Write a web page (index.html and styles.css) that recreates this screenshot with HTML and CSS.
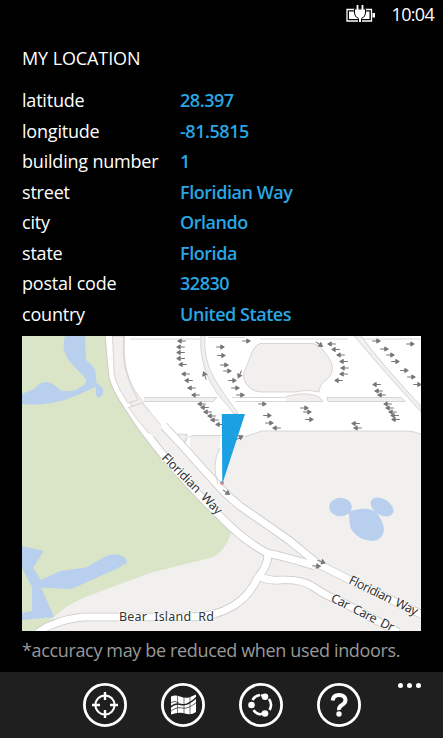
FILE: index.html
```html
<!DOCTYPE html>
<html>
	<head>
		<meta charset="UTF-8">
		<title>My Location</title>
		<link rel="stylesheet" href="styles.css">
	</head>
	<body>
		<div class="phone">
			<div class="status">
				<svg class="battery" width="32" height="20" viewBox="0 0 32 20">
					<path d="M2 5.5h24.500v11.500h-24.500z" fill="none" stroke="#fff" stroke-width="1.300"/>
					<path d="M4 7.500h20.500v7.500h-20.500zM27.500 9h2.500v4.500h-2.500z" fill="#fff"/>
					<path d="M9.500 5h11v4q0 4-4 5.500v4h-3v-4q-4-1.500-4-5.500z" fill="#fff" stroke="#000" stroke-width="1"/>
					<path d="M12.500 1v5M17.500 1v5" stroke="#fff" stroke-width="1.800"/>
				</svg>
				<span class="time">10:04</span>
			</div>
			<h1 class="title">MY LOCATION</h1>
			<dl class="info">
				<dt>latitude</dt><dd>28.397</dd>
				<dt>longitude</dt><dd>-81.5815</dd>
				<dt>building number</dt><dd>1</dd>
				<dt>street</dt><dd>Floridian Way</dd>
				<dt>city</dt><dd>Orlando</dd>
				<dt>state</dt><dd>Florida</dd>
				<dt>postal code</dt><dd>32830</dd>
				<dt>country</dt><dd>United States</dd>
			</dl>
			<svg class="map" width="399" height="295" viewBox="22 336 399 295">
				<defs>
					<path id="arr" d="M-3.800 0H3.500M4.300 0L.8 -2.100V2.100Z"/>
					<path id="way1" d="M161 458.500L222 520"/>
					<path id="way2" d="M348 583L424 620"/>
					<path id="care" d="M330 601L402 637"/>
				</defs>
				<rect class="land" x="22" y="336" width="399" height="295"/>
				<!-- park and lakes -->
				<path class="park" d="M22 336H107L109 360Q109 377 112 383L124 405L143 433L162 460L231 532Q230 540 222 550Q217 556 210 558L150 573L123 583L83 598Q65 606 54 617L36 631H22Z"/>
				<path class="water" d="M65 336H85L86 360Q94 366 95.500 372L96.500 383L102 387Q104 390 103 393Q101 398 98 397.500L96 395V386.500Q80 395 63 400.500Q43 406 22 404V394L34 389Q38 383 46 382Q51 382 54 385L61 390.500Q69 392 76 390L85 384Q88 380 84 377L73 365Q60 353 65 336Z"/>
				<path class="water" d="M22 546L43.700 551L33 568L41 580L60 571L86 567.500L104 557Q114 553 119 555Q126 556 127 563L116 569L75 587.500Q72 589 67 589L41 587.500L54 617L22 620V613L32 611V587L22 568Z"/>
				<g class="water">
					<ellipse cx="340.500" cy="507" rx="11.300" ry="9.300"/>
					<ellipse cx="382" cy="507" rx="12.500" ry="8" transform="rotate(32 382 507)"/>
					<path d="M349 512Q367 505 377 513Q384 523 384 530Q382 541 372 541Q358 540 351 529Q349 523 349 512Z"/>
				</g>
				<!-- parking lots -->
				<path class="lot" d="M124.500 336Q123 358 127 372Q131 388 144 403L172 436L185 453L190 446Q189 436 194 435H221L219 450Q214 460 215 470L218 483L223 482Q222 462 228 450Q233 441 240 438L262 431H405Q414 431 421 434V336Z"/>
				<path class="line" d="M124.500 336Q123 358 127 372Q131 388 144 403M238 439L262 431H405Q414 431 421 434M130 339H203M208 337.500H245M260 339H348M362 339H421"/>
				<path class="block" d="M260 343.500H313Q320 345 323 350Q332 360 332.500 368Q332 376 325 381Q320 384 319 392Q305 389 296 392H262Q248 392 243.500 378Q243 373 246 368L252 352Q255 345 260 343.500Z"/>
				<path class="block" d="M286 396.500Q303 392 313 395Q320 396 323 401.500H286M144 397.500H217L213 401.500H144M232 397.500H286M235 401.500H286M327 397.500H401L405.500 401.500H328Z"/>
				<path class="block" d="M171.500 435.500Q180 433 187.500 434.500L183 445Z"/>
				<path class="block" d="M201 336Q199 356 208 377Q215 393 228 406L234 414L238 413Q220 389 213 376Q203 357 205 336M354 336Q385 373 421 412V406Q385 368 361 336"/>
				<path class="line" d="M186 450Q183 436 194 435.500H222"/>
				<!-- roads: dark casing first, white on top -->
				<g class="casing">
					<path d="M109 334Q111 360 113 377Q116 389 127 405Q143 431 165 457Q188 485 222 518Q243 540 267 553Q290 558 315 566"/>
					<path d="M164 426L179 442L203 469L216 483Q225 494 240 506L290 541L318 564L356 583L423 615"/>
					<path d="M268 554Q268 566 258 577Q249 597 233 606Q215 617 190 617H83Q55 620 37 633"/>
					<path d="M258 576Q268 581 280 580Q301 579 312 586Q326 596 340 601L398 632"/>
				</g>
				<g class="road">
					<path d="M109 334Q111 360 113 377Q116 389 127 405Q143 431 165 457Q188 485 222 518Q243 540 267 553Q290 558 315 566"/>
					<path d="M150 411L164 426L179 442L203 469L216 483Q225 494 240 506L290 541L318 564L356 583L423 615"/>
					<path d="M268 554Q268 566 258 577Q249 597 233 606Q215 617 190 617H83Q55 620 37 633"/>
					<path d="M258 576Q268 581 280 580Q301 579 312 586Q326 596 340 601L398 632"/>
				</g>
				<path class="block" d="M112.500 336H124Q122 356 126 371Q130 387 138 400L128 403Q113 381 114 370ZM128.500 407.500L142 403L161 425L149 433.500Q138 421 128.500 407.500Z"/>
				<path class="land" d="M143 423L160 423.500L162 428L153 437Z"/>
				<path class="line" d="M220 448Q211 464 218 484"/>
				<!-- driving directions -->
				<g class="arrows">
					<use href="#arr" x="220" y="347"/><use href="#arr" x="221" y="355.500"/><use href="#arr" x="224" y="365"/><use href="#arr" x="227" y="371"/><use href="#arr" x="232" y="380.500"/><use href="#arr" x="235" y="388"/><use href="#arr" x="240" y="395"/><use href="#arr" x="246" y="341"/><use href="#arr" x="262" y="404"/><use href="#arr" x="267" y="415.500"/><use href="#arr" x="269" y="423"/>
					<use href="#arr" x="304" y="408"/><use href="#arr" x="307" y="412"/><use href="#arr" x="309" y="419.500"/>
					<use href="#arr" x="376" y="341"/><use href="#arr" x="384" y="349"/><use href="#arr" x="390" y="355"/><use href="#arr" x="395" y="361.500"/><use href="#arr" x="404" y="370.500"/><use href="#arr" x="411" y="377"/><use href="#arr" x="417" y="384.500"/><use href="#arr" x="410" y="344"/>
					<use href="#arr" transform="translate(182 341) scale(-1 1)"/><use href="#arr" transform="translate(181 347) scale(-1 1)"/><use href="#arr" transform="translate(181 352.500) scale(-1 1)"/><use href="#arr" transform="translate(181 358.500) scale(-1 1)"/><use href="#arr" transform="translate(183 364.500) scale(-1 1)"/><use href="#arr" transform="translate(186 374) scale(-1 1)"/><use href="#arr" transform="translate(189 380.500) scale(-1 1)"/><use href="#arr" transform="translate(192 388) scale(-1 1)"/><use href="#arr" transform="translate(196 395) scale(-1 1)"/><use href="#arr" transform="translate(202 404) scale(-1 1)"/><use href="#arr" transform="translate(205 407.500) scale(-1 1)"/><use href="#arr" transform="translate(208 412) scale(-1 1)"/><use href="#arr" transform="translate(212 416) scale(-1 1)"/><use href="#arr" transform="translate(215 420) scale(-1 1)"/><use href="#arr" transform="translate(220 424.500) scale(-1 1)"/>
					<use href="#arr" transform="translate(332 344) scale(-1 1)"/><use href="#arr" transform="translate(336 349.500) scale(-1 1)"/><use href="#arr" transform="translate(341 355) scale(-1 1)"/><use href="#arr" transform="translate(344 361.500) scale(-1 1)"/><use href="#arr" transform="translate(345 368) scale(-1 1)"/><use href="#arr" transform="translate(344 374) scale(-1 1)"/><use href="#arr" transform="translate(339 380.500) scale(-1 1)"/>
					<use href="#arr" transform="translate(377 384.500) scale(-1 1)"/><use href="#arr" transform="translate(379 391) scale(-1 1)"/><use href="#arr" transform="translate(382 395) scale(-1 1)"/><use href="#arr" transform="translate(388 404) scale(-1 1)"/><use href="#arr" transform="translate(390 408) scale(-1 1)"/><use href="#arr" transform="translate(393 412) scale(-1 1)"/><use href="#arr" transform="translate(395 415.500) scale(-1 1)"/><use href="#arr" transform="translate(396 419.500) scale(-1 1)"/>
					<use href="#arr" transform="translate(356 423.500) scale(-1 1)"/><use href="#arr" transform="translate(358 428) scale(-1 1)"/><use href="#arr" transform="translate(277 428) scale(-1 1)"/>
					<use href="#arr" transform="translate(205 376) rotate(-110)"/><use href="#arr" transform="translate(240 374) rotate(115)"/><use href="#arr" transform="translate(319 344) rotate(35)"/><use href="#arr" transform="translate(239 438) rotate(-30)"/><use href="#arr" transform="translate(226 492) rotate(35)"/><use href="#arr" transform="translate(321 561.500) rotate(20)"/><use href="#arr" transform="translate(316 566) rotate(5)"/>
				</g>
				<g class="names">
					<text><textPath href="#way1" textLength="80">Floridian&#160; Way</textPath></text>
					<text><textPath href="#way2" textLength="75">Floridian&#160; Way</textPath></text>
					<text><textPath href="#care" textLength="69">Car&#160; Care&#160; Dr</textPath></text>
					<text x="119" y="621" textLength="95" xml:space="preserve">Bear  Island  Rd</text>
				</g>
				<circle cx="222" cy="483" r="2" fill="#d98a8a"/>
				<path class="pointer" d="M221.800 414H245L222.300 484Z"/>
			</svg>
			<p class="note">*accuracy may be reduced when used indoors.</p>
			<div class="appbar">
				<svg class="icon" width="46" height="46" viewBox="0 0 46 46">
					<circle class="ring" cx="23" cy="23" r="20.600"/>
					<circle cx="23" cy="23" r="9.600" fill="none" stroke="#fff" stroke-width="2"/>
					<path d="M23 10v8M23 28v8M10 23h8M28 23h8" stroke="#fff" stroke-width="2.400"/>
				</svg>
				<svg class="icon" width="46" height="46" viewBox="0 0 46 46">
					<circle class="ring" cx="23" cy="23" r="20.600"/>
					<path d="M11 14.500Q15 12.500 20 14.500T29 15.500L36 12.500V30Q31 33.500 25 31.500T11 32.500Z" fill="#fff"/>
					<path d="M17.500 13V33M24 14V32M30 14V33" stroke="#1f1f1f" stroke-width=".6" fill="none"/>
					<path d="M10 25.500Q15 20.500 21 22.500T37 15" stroke="#1f1f1f" stroke-width="1.500" fill="none"/>
					<path d="M10 30Q16 24.500 22 26T37 20M11 20.500Q15 18 19 21" stroke="#1f1f1f" stroke-width=".7" fill="none"/>
				</svg>
				<svg class="icon" width="46" height="46" viewBox="0 0 46 46">
					<circle class="ring" cx="23" cy="23" r="20.600"/>
					<path d="M14.500 18A10 10 0 0 1 22 13M31 17A10 10 0 0 1 31.500 28M15.500 28A10 10 0 0 0 23 32.500" fill="none" stroke="#fff" stroke-width="2.600"/>
					<path d="M23 13L27 15M23 32L27 31" stroke="#fff" stroke-width="2.400"/>
					<circle cx="13.500" cy="23" r="3.300" fill="#fff"/><circle cx="27" cy="14.800" r="3.300" fill="#fff"/><circle cx="27" cy="31.500" r="3.300" fill="#fff"/>
				</svg>
				<svg class="icon" width="46" height="46" viewBox="0 0 46 46">
					<circle class="ring" cx="23" cy="23" r="20.600"/>
					<path d="M16.700 18.500Q17.200 13 23 13T29.500 18Q29.500 21 26 23T23.200 28" fill="none" stroke="#fff" stroke-width="4"/>
					<circle cx="23" cy="32" r="2.700" fill="#fff"/>
				</svg>
				<div class="more"><i></i><i></i><i></i></div>
			</div>
		</div>
	</body>
</html>
```
FILE: styles.css
```css
*{
	margin: 0;
	padding: 0;
}
body{
	background: #000;
	color: #fff;
	font-family: "Open Sans", "Noto Sans", sans-serif;
	font-size: 18px;
}
.phone{
	width: 443px;
	height: 738px;
	display: flex;
	flex-direction: column;
	overflow: hidden;
}
.status{
	height: 28px;
	padding-right: 9px;
	display: flex;
	justify-content: flex-end;
	align-items: center;
}
.battery{
	margin: 0 15px 0 0;
}
.time{
	font-size: 18px;
	letter-spacing: -0.7px;
}
.title{
	font-size: 18px;
	font-weight: 400;
	letter-spacing: -0.1px;
	line-height: 30px;
	height: 30px;
	margin: 15px 0 12px 22px;
}
.info{
	display: grid;
	grid-template-columns: 158px 1fr;
	grid-auto-rows: 30.500px;
	line-height: 30px;
	padding-left: 22px;
	height: 251px;
	letter-spacing: -0.200px;
}
.info dd{
	color: #29a6e3;
	font-weight: 600;
	letter-spacing: -0.450px;
}
.map{
	display: block;
	flex: none;
	margin-left: 22px;
}
.land{
	fill: #f2f0ee;
}
.park{
	fill: #dae5c8;
}
.water{
	fill: #b8cfed;
}
.lot{
	fill: #fff;
}
.line{
	fill: none;
	stroke: #cfcbca;
	stroke-width: .8;
}
.block{
	fill: #f2f0ee;
	stroke: #cfcbca;
	stroke-width: .8;
}
.casing{
	fill: none;
	stroke: #c9c5c6;
	stroke-width: 8.500;
}
.road{
	fill: none;
	stroke: #fff;
	stroke-width: 7;
}
.arrows{
	fill: #777;
	stroke: #777;
	stroke-width: 1;
}
.names{
	fill: #333;
	font-family: "Noto Sans", sans-serif;
	font-size: 12.500px;
	stroke: #fff;
	stroke-width: 2px;
	stroke-opacity: .7;
	paint-order: stroke;
}
.pointer{
	fill: #1ba1e2;
}
.note{
	height: 41px;
	line-height: 38px;
	padding-left: 22px;
	color: #999;
	letter-spacing: -0.350px;
	white-space: nowrap;
}
.appbar{
	height: 66px;
	background: #1f1f1f;
	display: flex;
	gap: 32px;
	padding: 10px 0 0 82px;
	box-sizing: border-box;
}
.ring{
	fill: none;
	stroke: #fff;
	stroke-width: 2.800;
}
.more{
	display: flex;
	gap: 4px;
	margin: 1px 0 0 4px;
}
.more i{
	width: 5px;
	height: 5px;
	border-radius: 50%;
	background: #fff;
}
```
